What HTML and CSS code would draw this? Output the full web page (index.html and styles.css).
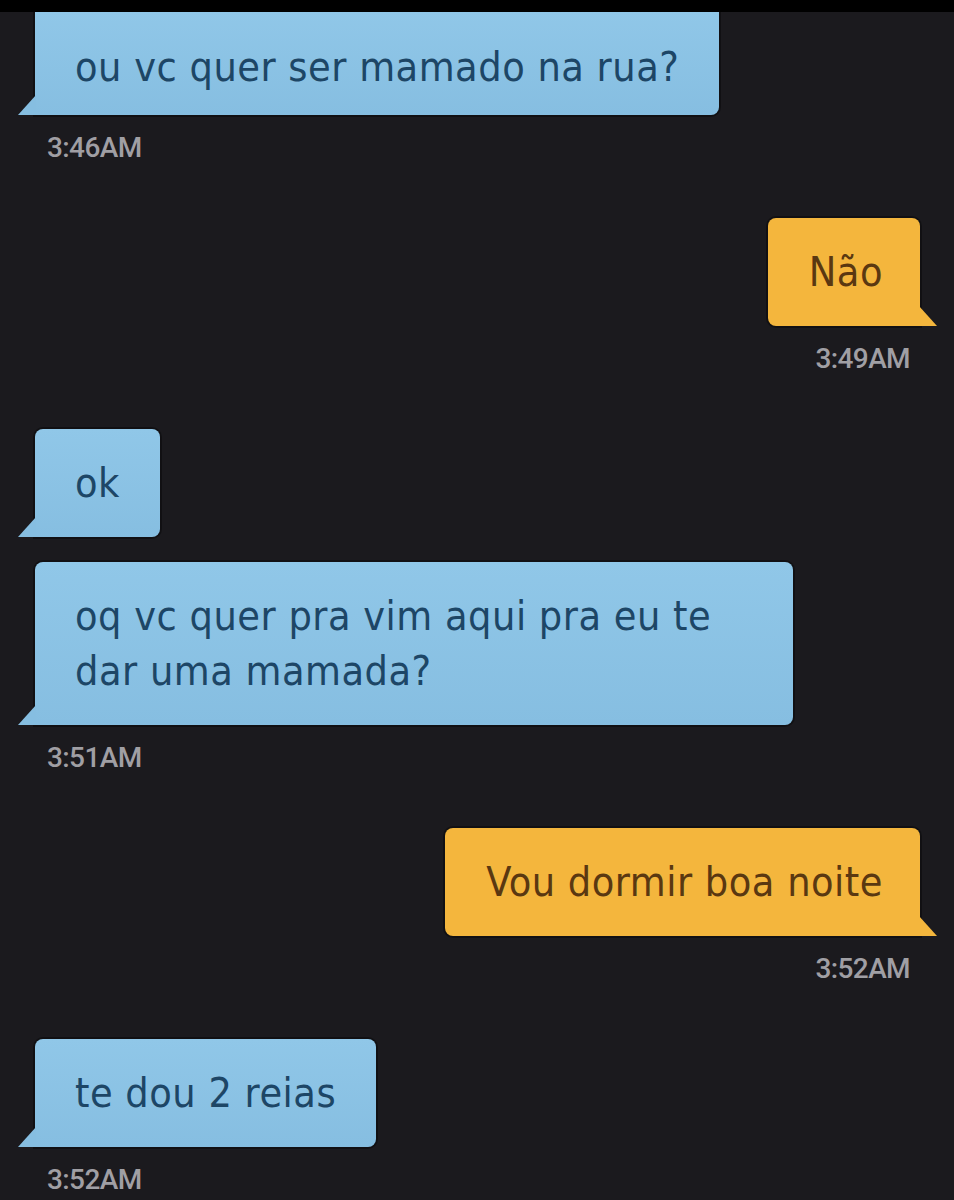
FILE: index.html
```html
<!DOCTYPE html>
<html lang="pt">
<head>
<meta charset="utf-8">
<title>Chat</title>
<link rel="stylesheet" href="styles.css">
</head>
<body>
<div class="topbar"></div>
<main class="chat">
  <div class="msg in">
    <div class="bubble cut">ou vc quer ser mamado na rua?</div>
    <div class="time">3:46AM</div>
  </div>
  <div class="msg out">
    <div class="bubble">Não</div>
    <div class="time">3:49AM</div>
  </div>
  <div class="msg in grouped">
    <div class="bubble">ok</div>
  </div>
  <div class="msg in">
    <div class="bubble wide">oq vc quer pra vim aqui pra eu te<br>dar uma mamada?</div>
    <div class="time">3:51AM</div>
  </div>
  <div class="msg out">
    <div class="bubble">Vou dormir boa noite</div>
    <div class="time">3:52AM</div>
  </div>
  <div class="msg in">
    <div class="bubble">te dou 2 reias</div>
    <div class="time">3:52AM</div>
  </div>
</main>
</body>
</html>
```
FILE: styles.css
```css
html, body {
  margin: 0;
  padding: 0;
}
body {
  width: 954px;
  height: 1200px;
  overflow: hidden;
  background: #1b1a1e;
  font-family: "DejaVu Sans Condensed", "DejaVu Sans", sans-serif;
}
.topbar {
  height: 12px;
  background: #000;
}
.chat {
  display: flex;
  flex-direction: column;
  gap: 56px;
}
.msg {
  display: flex;
  flex-direction: column;
}
.msg.grouped {
  margin-bottom: -31px;
}
.msg.in {
  align-items: flex-start;
  padding-left: 35px;
}
.msg.out {
  align-items: flex-end;
  padding-right: 34px;
}
.bubble {
  position: relative;
  font-size: 41px;
  letter-spacing: 0.5px;
  line-height: 55px;
  padding: 27px 40px 26px 40px;
  border-radius: 8px;
  box-shadow: 0 0 0 2px rgba(0, 0, 0, 0.35);
}
.bubble.wide {
  width: 678px;
}
.bubble::after {
  content: "";
  position: absolute;
  bottom: 0;
  width: 18px;
  height: 20px;
}
.in .bubble {
  background: linear-gradient(180deg, #90c7e8 0%, #86bee1 100%);
  color: #1d4666;
  border-bottom-left-radius: 0;
}
.in .bubble::after {
  left: -17px;
  background: #86bee1;
  clip-path: polygon(100% 0, 100% 100%, 0 100%);
}
.out .bubble {
  background: #f4b63d;
  color: #5a3811;
  padding-left: 41px;
  padding-right: 37px;
  border-bottom-right-radius: 0;
}
.out .bubble::after {
  right: -17px;
  background: #f4b63d;
  clip-path: polygon(0 0, 100% 100%, 0 100%);
}
.bubble.cut {
  padding-top: 28px;
  padding-bottom: 20px;
  border-top-left-radius: 0;
  border-top-right-radius: 0;
}
.time {
  margin-top: 19px;
  font-family: Roboto, "DejaVu Sans Condensed", sans-serif;
  font-weight: 500;
  font-size: 28px;
  line-height: 28px;
  letter-spacing: -0.6px;
  color: #a09fa4;
}
.in .time {
  margin-left: 12px;
}
.out .time {
  margin-right: 10px;
}
```
